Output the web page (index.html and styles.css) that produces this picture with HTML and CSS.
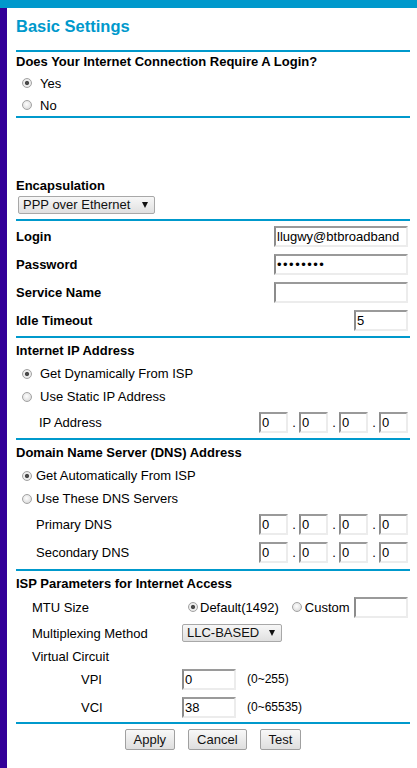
FILE: index.html
```html
<!DOCTYPE html>
<html lang="en">
  <head>
    <meta charset="UTF-8" />
    <meta name="viewport" content="width=device-width, initial-scale=1.0" />
    <title>Basic Settings</title>
    <link rel="stylesheet" href="styles.css">
  </head>
  <body>
    <div class="topbar"></div>
    <div class="page">
      <h1 class="title">Basic Settings</h1>
      <hr class="rule" />

      <div class="head">Does Your Internet Connection Require A Login?</div>
      <label class="opt wide"><input type="radio" name="login" checked /> Yes</label>
      <label class="opt wide"><input type="radio" name="login" /> No</label>
      <hr class="rule" />

      <div class="spacer"></div>
      <div class="head">Encapsulation</div>
      <div class="pick-row">
        <span class="pick"><select class="encap"><option>PPP over Ethernet</option></select></span>
      </div>
      <hr class="rule" />

      <div class="fields">
        <div class="row"><b>Login</b><input type="text" class="long" value="llugwy@btbroadband" /></div>
        <div class="row"><b>Password</b><input type="password" class="long secret" value="password" /></div>
        <div class="row"><b>Service Name</b><input type="text" class="long" value="" /></div>
        <div class="row"><b>Idle Timeout</b><input type="text" class="short" value="5" /></div>
      </div>
      <hr class="rule gap2" />

      <div class="head tall">Internet IP Address</div>
      <label class="opt wide mid"><input type="radio" name="ip" checked /> Get Dynamically From ISP</label>
      <label class="opt wide mid"><input type="radio" name="ip" /> Use Static IP Address</label>
      <div class="row indent-ip">
        <span>IP Address</span>
        <span class="quad">
          <input type="text" value="0" /><i>.</i><input type="text" value="0" /><i>.</i><input type="text" value="0" /><i>.</i><input type="text" value="0" />
        </span>
      </div>
      <hr class="rule gap2" />

      <div class="head tall">Domain Name Server (DNS) Address</div>
      <label class="opt mid"><input type="radio" name="dns" checked /> Get Automatically From ISP</label>
      <label class="opt mid"><input type="radio" name="dns" /> Use These DNS Servers</label>
      <div class="row indent-dns">
        <span>Primary DNS</span>
        <span class="quad">
          <input type="text" value="0" /><i>.</i><input type="text" value="0" /><i>.</i><input type="text" value="0" /><i>.</i><input type="text" value="0" />
        </span>
      </div>
      <div class="row indent-dns">
        <span>Secondary DNS</span>
        <span class="quad">
          <input type="text" value="0" /><i>.</i><input type="text" value="0" /><i>.</i><input type="text" value="0" /><i>.</i><input type="text" value="0" />
        </span>
      </div>
      <hr class="rule gap3" />

      <div class="head tall">ISP Parameters for Internet Access</div>
      <div class="isp">
        <div class="isp-row mtu">
          <span class="isp-label">MTU Size</span>
          <span class="isp-ctrl">
            <label class="mtu-opt first"><input type="radio" name="mtu" checked /> Default(1492)</label>
            <label class="mtu-opt"><input type="radio" name="mtu" /> Custom</label>
            <input type="text" class="short push" value="" />
          </span>
        </div>
        <div class="isp-row">
          <span class="isp-label">Multiplexing Method</span>
          <span class="isp-ctrl">
            <span class="pick"><select class="mux"><option>LLC-BASED</option></select></span>
          </span>
        </div>
        <div class="isp-row vc">
          <span class="isp-label">Virtual Circuit</span>
        </div>
        <div class="isp-row">
          <span class="isp-label sub">VPI</span>
          <span class="isp-ctrl"><input type="text" class="short" value="0" /><small>(0~255)</small></span>
        </div>
        <div class="isp-row">
          <span class="isp-label sub">VCI</span>
          <span class="isp-ctrl"><input type="text" class="short" value="38" /><small>(0~65535)</small></span>
        </div>
      </div>
      <hr class="rule gap1" />

      <div class="actions">
        <button type="button">Apply</button>
        <button type="button">Cancel</button>
        <button type="button">Test</button>
      </div>
    </div>
  </body>
</html>
```

FILE: styles.css
```css
body {
  margin: 0;
  background-color: #fff;
  color: #000;
  font-family: "Liberation Sans", Arial, sans-serif;
  font-size: 13px;
}
.topbar {
  height: 8px;
  background-color: #0099cc;
}
.page {
  border-left: 7px solid #330099;
  min-height: 760px;
  padding: 0 7px 0 9px;
}
.title {
  margin: 0;
  height: 42px;
  padding-top: 8px;
  box-sizing: border-box;
  font-size: 16.5px;
  line-height: 20px;
  color: #0099cc;
}
.rule {
  height: 2px;
  margin: 0;
  border: 0;
  background-color: #0099cc;
}
.gap1 {
  margin-top: 1px;
}
.gap2 {
  margin-top: 2px;
}
.gap3 {
  margin-top: 3px;
}
.head {
  height: 20px;
  line-height: 20px;
  font-weight: bold;
}
.head.tall {
  height: 24px;
  line-height: 26px;
}
.spacer {
  height: 58px;
}

/* radio rows */
.opt {
  display: flex;
  align-items: center;
  gap: 4px;
  height: 22px;
  padding-left: 6px;
}
.opt.wide {
  gap: 8px;
}
.opt.mid {
  height: 23px;
}
input[type="radio"] {
  appearance: none;
  flex: none;
  width: 10px;
  height: 10px;
  margin: 0;
  border: 1px solid #a2a2a2;
  border-radius: 50%;
  box-sizing: border-box;
  background: radial-gradient(circle at 45% 40%, #fdfdfd 0, #e6e6e6 55%, #cfcfcf 100%);
}
input[type="radio"]:checked {
  background: radial-gradient(circle at 50% 50%, #4a4a4a 0, #4a4a4a 1.6px, #f2f2f2 2.6px, #dadada 100%);
}

/* selects */
.pick {
  position: relative;
  display: inline-block;
}
.pick::after {
  content: "";
  position: absolute;
  right: 7px;
  top: 6px;
  border-left: 3px solid transparent;
  border-right: 3px solid transparent;
  border-top: 6px solid #111;
  pointer-events: none;
}
select {
  appearance: none;
  display: block;
  height: 18px;
  margin: 0;
  padding: 0 0 0 4px;
  border: 1px solid #a8a8a8;
  border-radius: 2px;
  background: linear-gradient(#f7f7f7, #e0e0e0);
  color: #111;
  font-family: "Liberation Sans", Arial, sans-serif;
  font-size: 13px;
  line-height: 16px;
}
.pick-row {
  height: 18px;
  padding-left: 2px;
  margin-bottom: 5px;
}
.encap {
  width: 137px;
}
.mux {
  width: 100px;
}

/* text inputs */
input[type="text"],
input[type="password"] {
  box-sizing: border-box;
  height: 21px;
  margin: 0;
  padding: 0 1px;
  border-style: solid;
  border-width: 2px;
  border-color: #9a9a9a #ececec #ececec #8c8c8c;
  background-color: #fff;
  color: #000;
  font-family: "Liberation Sans", Arial, sans-serif;
  font-size: 13px;
  outline: none;
}
.secret {
  letter-spacing: 1.5px;
}
.long {
  width: 134px;
}
.short {
  width: 54px;
}
.fields {
  padding-top: 1px;
}
.row {
  display: flex;
  align-items: center;
  justify-content: space-between;
  height: 28px;
  padding-right: 2px;
}
.indent-ip {
  padding-left: 23px;
}
.indent-dns {
  padding-left: 20px;
}
.quad {
  display: flex;
  align-items: center;
}
.quad input[type="text"] {
  width: 29px;
}
.quad i {
  width: 11px;
  padding-left: 1px;
  box-sizing: border-box;
  font-style: normal;
  text-align: center;
}

/* ISP parameters */
.isp-row {
  display: flex;
  align-items: center;
  height: 28px;
  padding-right: 2px;
}
.isp-row.mtu {
  height: 24px;
}
.isp-row.vc {
  height: 18px;
}
.isp-label {
  flex: none;
  width: 150px;
  padding-left: 16px;
}
.isp-label.sub {
  width: 101px;
  padding-left: 65px;
}
.isp-ctrl {
  flex: 1;
  display: flex;
  align-items: center;
}
.mtu-opt {
  display: flex;
  align-items: center;
  gap: 3px;
}
.mtu-opt.first {
  margin-left: 6px;
  margin-right: 13px;
  gap: 2px;
}
.push {
  margin-left: auto !important;
}
.isp-ctrl small {
  margin-left: 11px;
  font-size: 12px;
}

/* buttons */
.actions {
  display: flex;
  justify-content: center;
  gap: 13px;
  margin-top: 5px;
}
button {
  height: 21px;
  padding: 0 8px;
  border: 1px solid #a0a0a0;
  border-radius: 2px;
  background: linear-gradient(#f8f8f8, #dedede);
  color: #111;
  font-family: "Liberation Sans", Arial, sans-serif;
  font-size: 13px;
}
```
